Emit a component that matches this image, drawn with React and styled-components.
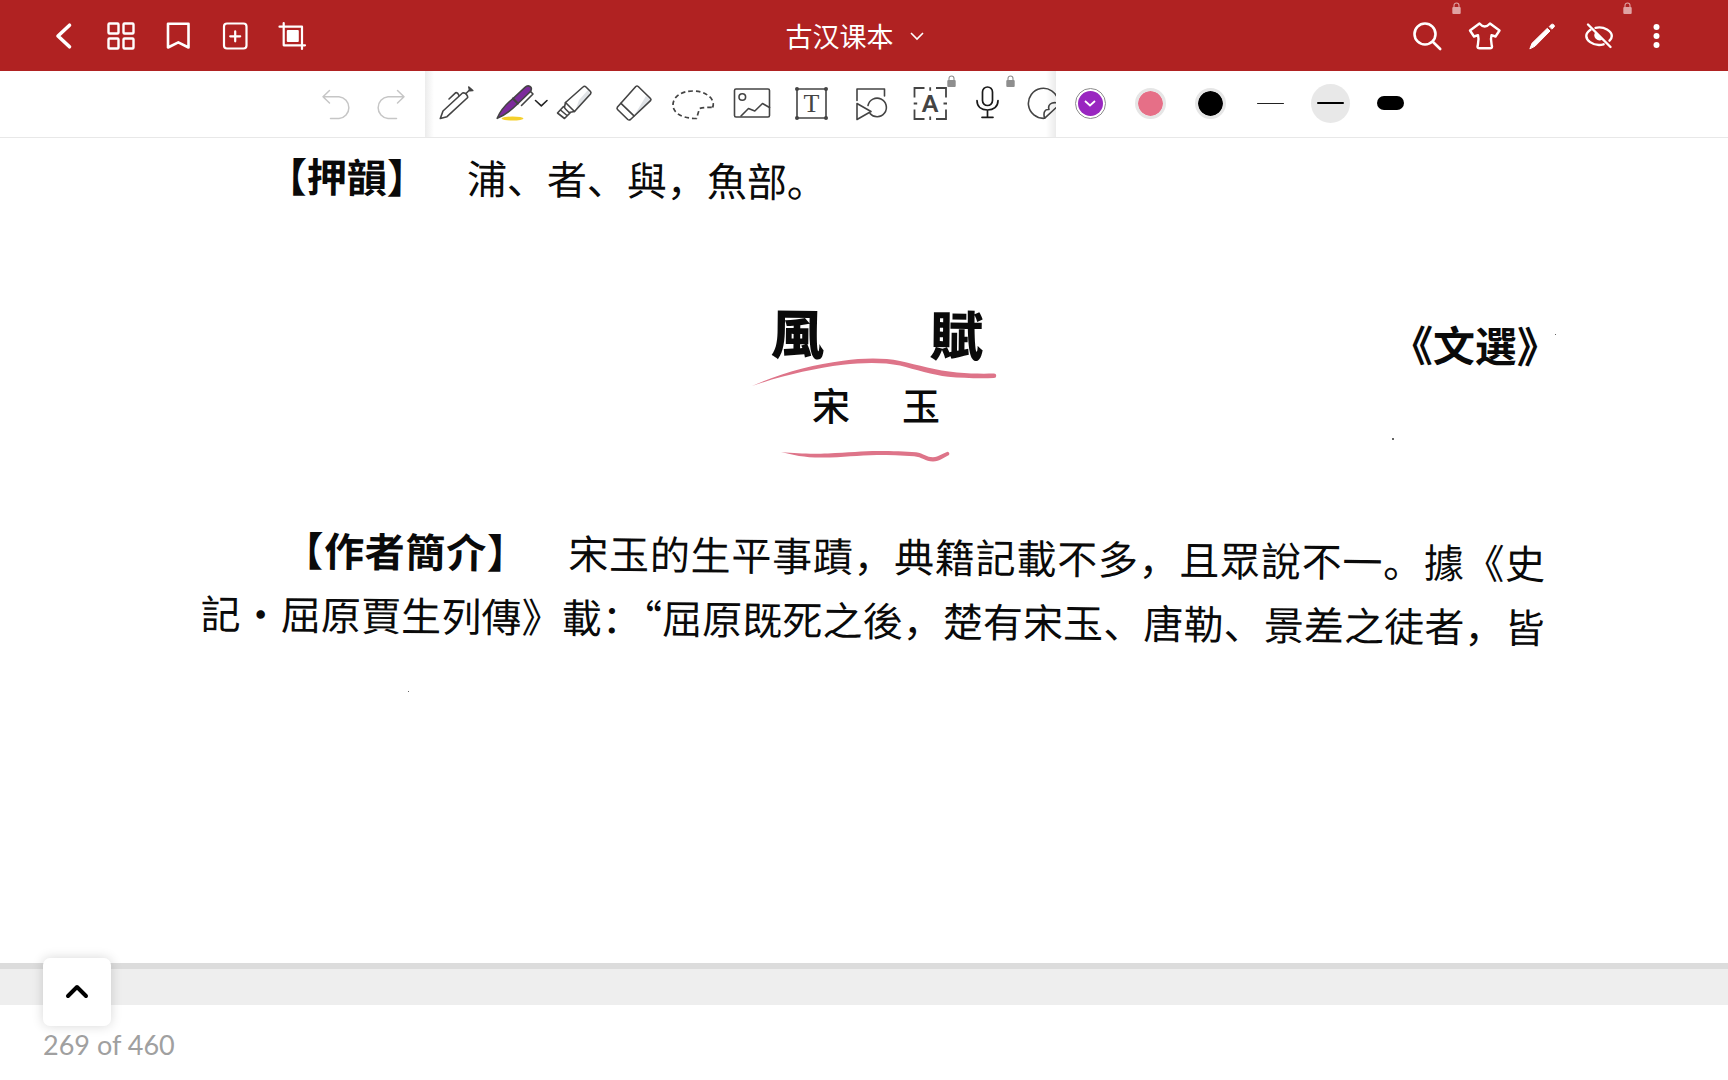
import styled, { createGlobalStyle } from "styled-components";

const GlobalStyle = createGlobalStyle`
  * {
    box-sizing: border-box;
  }

  body {
    margin: 0;
    background-color: #fff;
    font-family: "Lato", "Noto Sans CJK SC", sans-serif;
  }

  button {
    padding: 0;
    border: none;
    background: none;
    color: inherit;
    font: inherit;
    cursor: pointer;
  }

  svg {
    display: block;
    overflow: visible;
  }
`;

const AppShell = styled.div`
  display: flex;
  flex-direction: column;
  min-height: 100vh;
`;

/* ---------- header ---------- */

const Header = styled.header`
  display: grid;
  grid-template-columns: 1fr auto 1fr;
  align-items: center;
  height: 71px;
  padding: 0 44px 0 35px;
  background-color: #b02222;
  color: #fff;
`;

const HeaderGroup = styled.div`
  display: flex;
  justify-content: ${({ $end }) => ($end ? "flex-end" : "flex-start")};
`;

const HeaderButton = styled.button`
  position: relative;
  display: flex;
  align-items: center;
  justify-content: center;
  width: 57px;
  height: 71px;
`;

const TitleButton = styled.button`
  display: flex;
  align-items: center;
  gap: 16px;
  padding-right: 10px;
  font-family: "Noto Sans CJK SC", sans-serif;
  font-size: 27px;
  line-height: 40px;
`;

const LockBadge = styled.span`
  position: absolute;
  top: ${({ $top }) => $top}px;
  left: calc(50% + ${({ $shift }) => $shift}px);
  color: ${({ $color }) => $color};
`;

/* ---------- toolbar ---------- */

const Toolbar = styled.div`
  display: grid;
  grid-template-columns: 425fr 631px 672fr;
  height: 67px;
  border-bottom: 1px solid #e8e8e8;
  background-color: #fff;
`;

const HistoryGroup = styled.div`
  display: flex;
  align-items: center;
  justify-content: flex-end;
  gap: 25px;
  padding-right: 19px;
  color: #c6c6c6;
`;

const ToolStrip = styled.div`
  position: relative;
  display: flex;
  overflow: hidden;
  padding-left: 2px;
  background: linear-gradient(to right, #ececec, #fff 9px);
  color: #444;

  &::after {
    content: "";
    position: absolute;
    top: 0;
    right: 0;
    width: 10px;
    height: 100%;
    background: linear-gradient(to right, rgba(0, 0, 0, 0), rgba(0, 0, 0, 0.08));
  }
`;

const ToolButton = styled.button`
  position: relative;
  display: flex;
  flex-shrink: 0;
  align-items: center;
  justify-content: center;
  width: 59px;
  padding-bottom: 2px;
`;

const StyleGroup = styled.div`
  display: flex;
  padding-left: 4px;
`;

const StyleButton = styled.button`
  display: flex;
  align-items: center;
  justify-content: center;
  width: 60px;
  padding-bottom: 2px;
`;

const Swatch = styled.span`
  display: flex;
  align-items: center;
  justify-content: center;
  width: 31px;
  height: 31px;
  border: ${({ $selected }) => ($selected ? "1px solid #8d8d8d" : "3px solid #e6e6e6")};
  border-radius: 50%;
  padding: ${({ $selected }) => ($selected ? "2px" : "0")};
  background-color: ${({ $color }) => $color};
  background-clip: content-box;
  color: #fff;
`;

const Thickness = styled.span`
  display: flex;
  align-items: center;
  justify-content: center;
  width: 39px;
  height: 39px;
  border-radius: 50%;
  background-color: ${({ $selected }) => ($selected ? "#e8e8e8" : "transparent")};

  &::before {
    content: "";
    width: 27px;
    height: ${({ $size }) => $size}px;
    border-radius: 8px;
    background-color: ${({ $size }) => ($size === 1 ? "#222" : "#000")};
  }
`;

/* ---------- book page ---------- */

const Sheet = styled.main`
  flex: 1;
  padding: 6px 183px 40px 201px;
  background-color: #fff;
  color: #0a0a0a;
  font-family: "Noto Sans CJK SC", sans-serif;
`;

const Heading = styled.b`
  margin-right: 20px;
`;

// the scan leans slightly to the right
const RhymeNote = styled.p`
  margin: 0;
  padding-left: 66px;
  font-size: 40px;
  line-height: 60px;
  transform: rotate(0.6deg);
  transform-origin: left center;
`;

const TitleBlock = styled.section`
  position: relative;
  margin-top: 98px;
`;

const TitleRow = styled.div`
  display: grid;
  grid-template-columns: 1fr auto 1fr;
`;

const PoemTitle = styled.h1`
  grid-column: 2;
  margin: 0;
  padding-left: 8px;
  font-size: 53px;
  font-weight: 900;
  line-height: 60px;
  transform: rotate(0.6deg);
`;

const Source = styled.p`
  justify-self: end;
  margin: 12px -14px 0 0;
  font-size: 42px;
  font-weight: 700;
  line-height: 60px;
  transform: rotate(0.6deg);
`;

const Author = styled.p`
  display: flex;
  justify-content: center;
  gap: 52px;
  margin: 0;
  padding-left: 6px;
  font-size: 38px;
  font-weight: 500;
  line-height: 60px;
`;

const InkStrokes = styled.svg`
  position: absolute;
  top: 48px;
  left: calc(50% - 130px);
  fill: #de7489;
`;

const Speck = styled.span`
  position: absolute;
  top: ${({ $top }) => $top}px;
  right: ${({ $right }) => $right}px;
  width: ${({ $size }) => $size}px;
  height: ${({ $size }) => $size}px;
  border-radius: 50%;
  background-color: #333;
`;

const BiographyBlock = styled.section`
  position: relative;
  margin-top: 82px;
`;

const Biography = styled.p`
  margin: 0;
  font-size: 40px;
  line-height: 64px;
  text-align: justify;
  text-align-last: justify;
  text-indent: 82px;
  transform: rotate(0.6deg);
  transform-origin: left center;
`;

/* ---------- footer ---------- */

const Footer = styled.footer`
  position: relative;
`;

const PageGap = styled.div`
  height: 42px;
  border-top: 6px solid #dcdcdc;
  background-color: #eee;
`;

const PageNumber = styled.p`
  margin: 0;
  padding: 24px 43px 19px;
  color: #a0a0a0;
  font-size: 27px;
  line-height: 32px;
`;

const ExpandButton = styled.button`
  position: absolute;
  top: -5px;
  left: 43px;
  display: flex;
  align-items: center;
  justify-content: center;
  width: 68px;
  height: 68px;
  border-radius: 7px;
  padding-bottom: 2px;
  background-color: #fff;
  box-shadow: 0 0 12px rgba(0, 0, 0, 0.16);
  color: #000;
`;

/* ---------- icons ---------- */

function Icon({ size = 28, width = 2, children }) {
  return (
    <svg
      width={size}
      height={size}
      viewBox={`0 0 ${size} ${size}`}
      fill="none"
      stroke="currentColor"
      strokeWidth={width}
      strokeLinecap="round"
      strokeLinejoin="round"
      aria-hidden="true"
    >
      {children}
    </svg>
  );
}

function Lock({ top, shift, color }) {
  return (
    <LockBadge $top={top} $shift={shift} $color={color}>
      <svg width="9" height="12" viewBox="0 0 9 12" aria-hidden="true">
        <path d="M2 5.5V3.5a2.5 2.5 0 0 1 5 0v2" fill="none" stroke="currentColor" strokeWidth="1.1" />
        <rect x="0.3" y="5" width="8.4" height="7" rx="1" fill="currentColor" />
      </svg>
    </LockBadge>
  );
}

const leftActions = [
  {
    label: "Back",
    icon: (
      <Icon width={3.6}>
        <path d="M19.5 3.2 8 14l11.5 10.8" />
      </Icon>
    ),
  },
  {
    label: "Thumbnails",
    icon: (
      <Icon width={2.4}>
        <rect x="1.5" y="1.5" width="10" height="10" rx="1" />
        <rect x="16.5" y="1.5" width="10" height="10" rx="1" />
        <rect x="1.5" y="16.5" width="10" height="10" rx="1" />
        <rect x="16.5" y="16.5" width="10" height="10" rx="1" />
      </Icon>
    ),
  },
  {
    label: "Bookmark",
    icon: (
      <Icon width={2.6}>
        <path d="M4 1.8h20.5v23.7l-10.2-5.2L4 25.5z" />
      </Icon>
    ),
  },
  {
    label: "Add page",
    icon: (
      <Icon width={2.2}>
        <rect x="3" y="1.5" width="22.5" height="25" rx="3" />
        <path d="M14.2 9.3v10M9.2 14.3h10" />
      </Icon>
    ),
  },
  {
    label: "Crop",
    icon: (
      <Icon width={2.2}>
        <path d="M1.500 4.700h22.500V27M5.700 1v22.300H27" />
        <rect x="8.8" y="8" width="12" height="12" rx="1" fill="currentColor" stroke="none" />
      </Icon>
    ),
  },
];

const rightActions = [
  {
    label: "Search",
    locked: true,
    icon: (
      <Icon width={2.6}>
        <circle cx="11" cy="12" r="10.500" />
        <path d="m18.800 19.800 7.400 7.200" />
      </Icon>
    ),
  },
  {
    label: "Theme",
    icon: (
      <Icon size={32} width={2.4}>
        <path d="M10.500 3.500Q15.700 9.500 21 3.500L30.500 10.500 26.500 16.500 22.500 15.200C21 20 22.500 23.500 23 26.500Q23 28.300 21 28.300H10.500Q8.500 28.300 8.500 26.500C9 23.500 10.500 20 9 15.200L5 16.500 1 10.500Z" />
      </Icon>
    ),
  },
  {
    label: "Edit",
    icon: (
      <Icon width={1}>
        <path fill="currentColor" d="M2 26.500 4 21.300 19.300 6.300 22 9 7.200 24Z" />
        <path fill="currentColor" d="m21.500 4.300 1.800-1.800q1.500-.800 2.500.300t.3 2.300L24 6.900Z" />
      </Icon>
    ),
  },
  {
    label: "Hide annotations",
    locked: true,
    icon: (
      <Icon width={2.4}>
        <path d="M5.500 7.800C2.500 9.800 1.300 12.300 1.300 14c0 4.300 6 9 12.700 9 1.700 0 3.200-.300 4.600-.700" />
        <path d="M10.500 5.800C19.500 3.800 26.800 9.500 26.800 14c0 1.700-.8 3.200-2.300 4.700" />
        <path d="M3 2.500 25.500 25" />
        <path d="M10.200 10.200a5.300 5.300 0 0 0 7 7.500z" fill="currentColor" stroke="none" />
      </Icon>
    ),
  },
  {
    label: "More",
    icon: (
      <Icon>
        <g fill="currentColor" stroke="none">
          <circle cx="14.500" cy="5" r="3" />
          <circle cx="14.500" cy="14" r="3" />
          <circle cx="14.500" cy="23" r="3" />
        </g>
      </Icon>
    ),
  },
];

const tools = [
  {
    label: "Ballpoint pen",
    icon: (
      <Icon size={40} width={1.6}>
        <path d="M3.300 35.500 6 28 25.500 10Q28 9.500 29.500 11.500T30.700 14.500L10 33.700Z" />
        <path d="M12 16 18.500 9.800Q20.500 9 22 12.500M29 10.500l4-4" />
        <path d="m31.800 4 4 3.500-3 .200z" fill="currentColor" />
      </Icon>
    ),
  },
  {
    label: "Fountain pen",
    icon: (
      <Icon size={40} width={1.6}>
        <ellipse cx="16.500" cy="35.500" rx="11" ry="2" fill="#f5d02c" stroke="none" />
        <path d="M1.200 35.300C4 28.500 9.500 21.500 17 15.500L29 4.300Q31.500 2 34 3.500T34.500 8.500L21.500 21C15.500 27 9 32 1.200 35.300Z" fill="#7c2b9b" />
        <path d="m17 15.500 4.800 5" strokeWidth="2.200" />
        <path d="M34.500 8.500 37 11 25.500 22.500" />
        <path d="m39.500 17.500 5.800 5.300 5.700-5.300" stroke="#222" />
      </Icon>
    ),
  },
  {
    label: "Highlighter",
    icon: (
      <Icon size={40} width={1.6}>
        <path d="M20 28.500 35.500 10.500 33 7 24 17Z" fill="#e1e4e7" stroke="none" />
        <path d="M10.500 19.500 28 4Q29.500 2.500 31 4L35.500 8.500Q36.500 9.500 35.500 11L19.500 28.500Z" />
        <path d="M10.500 19.500 9.500 24Q9.500 25 10.500 26L14 29.500 19.500 28.500M8.500 23.500 2.500 30 9.500 35.500 15.500 29.500M5.500 27 12 32.500" />
      </Icon>
    ),
  },
  {
    label: "Eraser",
    icon: (
      <Icon size={40} width={1.6}>
        <path d="M20.500 32 37 17 32 13Z" fill="#dfe2e6" stroke="none" />
        <path d="M21.800 3.500Q23 2.500 24.200 3.500L36.500 15.500Q37.500 16.500 36.500 17.700L16.500 36.500Q15 37.500 13.800 36.500L3.500 26.500Q2.500 25.500 3.500 24Z" />
        <path d="m7 20.300 13 12.500" />
      </Icon>
    ),
  },
  {
    label: "Lasso",
    icon: (
      <Icon size={40} width={1.7}>
        <path
          strokeDasharray="4.500 3"
          strokeLinecap="butt"
          d="M39.500 24.500C43 18 35 8 20 8 7 8 0 14.500 0 22c0 8 9 13.500 23.500 13.500L26.500 25.500Q33 24 39.500 24.500"
        />
      </Icon>
    ),
  },
  {
    label: "Image",
    icon: (
      <Icon size={40} width={1.6}>
        <rect x="2.500" y="6" width="35" height="28" rx="1.500" />
        <circle cx="10.300" cy="14" r="3.300" />
        <path d="m9 33 7.500-7.500 6.300 2.500L30.500 20.500l7 4" />
      </Icon>
    ),
  },
  {
    label: "Text",
    icon: (
      <Icon size={40} width={1.6}>
        <rect x="6" y="6" width="29" height="29" />
        <g fill="currentColor" stroke="none">
          <circle cx="6" cy="6" r="2" />
          <circle cx="35" cy="6" r="2" />
          <circle cx="6" cy="35" r="2" />
          <circle cx="35" cy="35" r="2" />
          <text x="20.500" y="28.500" textAnchor="middle" fontFamily="Liberation Serif, serif" fontSize="26">
            T
          </text>
        </g>
      </Icon>
    ),
  },
  {
    label: "Shapes",
    icon: (
      <Icon size={40} width={1.6}>
        <path d="M7 17.500V6H34.500V13" />
        <path d="M7 20.500 21 28.500 7 36.500Z" />
        <path d="M18 22.500A9.300 9.300 0 1 1 20 30.500" />
      </Icon>
    ),
  },
  {
    label: "Text recognition",
    locked: true,
    icon: (
      <Icon size={40} width={1.8}>
        <path
          strokeLinecap="butt"
          strokeLinejoin="miter"
          d="M5.500 14.500V5H15.500M27 5H37V14.500M37 26.500V36H27M15.500 36H5.500V26.500M21.200 4.200v3.500M21.200 33.500v3.500M4.700 20.500h3.500M34.500 20.500h3.500"
        />
        <text
          x="21.200"
          y="28.500"
          textAnchor="middle"
          fontFamily="Lato, sans-serif"
          fontSize="23"
          fontWeight="900"
          fill="currentColor"
          stroke="none"
        >
          A
        </text>
      </Icon>
    ),
  },
  {
    label: "Record audio",
    locked: true,
    icon: (
      <Icon size={40} width={1.7}>
        <g stroke="#1a1a1a">
          <rect x="14.500" y="4" width="10" height="18.500" rx="5" />
          <path d="M9 17.500C9 24 13.500 27 19.500 27S30 24 30 17.500M19.500 27v7M14 34.300h11" />
        </g>
      </Icon>
    ),
  },
  {
    label: "Sticker",
    icon: (
      <Icon size={40} width={1.6}>
        <path d="M31 17A15 15 0 1 0 17.500 35.300L32 22" />
        <path d="M17.500 35C16 29 18 26 22 26.500 20.500 22 24 18.500 31 20" />
      </Icon>
    ),
  },
];

const swatches = [
  { label: "Purple", color: "#9926c0", selected: true },
  { label: "Pink", color: "#e66f87" },
  { label: "Black", color: "#000" },
];

const thicknesses = [
  { label: "Thin", size: 1 },
  { label: "Medium", size: 2, selected: true },
  { label: "Thick", size: 14 },
];

function TopBar() {
  return (
    <Header>
      <HeaderGroup>
        {leftActions.map((action) => (
          <HeaderButton key={action.label} aria-label={action.label}>
            {action.icon}
          </HeaderButton>
        ))}
      </HeaderGroup>
      <TitleButton>
        古汉课本
        <svg width="14" height="8" viewBox="0 0 14 8" fill="none" stroke="currentColor" strokeWidth="1.600" aria-hidden="true">
          <path d="m1 1 6 6 6-6" />
        </svg>
      </TitleButton>
      <HeaderGroup $end>
        {rightActions.map((action) => (
          <HeaderButton key={action.label} aria-label={action.label}>
            {action.icon}
            {action.locked && <Lock top={2} shift={24} color="#e0a3a3" />}
          </HeaderButton>
        ))}
      </HeaderGroup>
    </Header>
  );
}

function ToolBar() {
  return (
    <Toolbar>
      <HistoryGroup>
        <button aria-label="Undo">
          <Icon size={30} width={1.500}>
            <path d="M8.500 1.500 2 7.800 8.500 14M2 7.800H18a10.900 10.900 0 0 1 0 21.700H9.500" />
          </Icon>
        </button>
        <button aria-label="Redo">
          <Icon size={30} width={1.500}>
            <path d="M21.500 1.500 28 7.800 21.500 14M28 7.800H12a10.900 10.900 0 0 0 0 21.700h8.500" />
          </Icon>
        </button>
      </HistoryGroup>
      <ToolStrip>
        {tools.map((tool) => (
          <ToolButton key={tool.label} aria-label={tool.label}>
            {tool.icon}
            {tool.locked && <Lock top={4} shift={18} color="#8e8e8e" />}
          </ToolButton>
        ))}
      </ToolStrip>
      <StyleGroup>
        {swatches.map((swatch) => (
          <StyleButton key={swatch.label} aria-label={swatch.label}>
            <Swatch $color={swatch.color} $selected={swatch.selected}>
              {swatch.selected && (
                <svg width="12" height="7" viewBox="0 0 12 7" fill="none" stroke="currentColor" strokeWidth="1.800" aria-hidden="true">
                  <path d="m1 1 5 4.500L11 1" />
                </svg>
              )}
            </Swatch>
          </StyleButton>
        ))}
        {thicknesses.map((item) => (
          <StyleButton key={item.label} aria-label={item.label}>
            <Thickness $size={item.size} $selected={item.selected} />
          </StyleButton>
        ))}
      </StyleGroup>
    </Toolbar>
  );
}

function BookPage() {
  return (
    <Sheet lang="zh-Hans">
      <RhymeNote>
        <Heading>【押韻】</Heading>　浦、者、與，魚部。
      </RhymeNote>
      <TitleBlock>
        <TitleRow>
          <PoemTitle>風　　賦</PoemTitle>
          <Source>《文選》</Source>
        </TitleRow>
        <Author>
          <span>宋</span>
          <span>玉</span>
        </Author>
        <InkStrokes width="260" height="120" viewBox="0 0 260 120" aria-hidden="true">
          <path d="M9 36C38 23 70 14.500 100 10.800 120 8 140 7.700 157 11 175 15 193 20.500 214 22.500 228 23.700 240 23.800 251 23.500A2.200 2.200 0 0 1 251 28C235 28.500 220 28 205 26.700 190 25 172 19.500 157 15.500 140 12 120 12.300 100 14.800 70 18.500 38 26 9 36Z" />
          <path d="M38 102C55 103.500 65 104 85 103.500 105 102.500 120 101.200 135 101 150 101 162 101.300 173 102.200 181 103.500 184 107.300 190 107.200 196 106.500 199 103.500 204 101.900A2 2 0 0 1 206 105C201 107.500 197 111 190 111.500 182 111.500 179 107 171 106.300 158 105.200 147 105 134 105 115 105.200 100 107.500 80 107.600 62 107.800 50 105 38 102Z" />
        </InkStrokes>
        <Speck $top={136} $right={151} $size={2} />
        <Speck $top={32} $right={-11} $size={1} />
      </TitleBlock>
      <BiographyBlock>
        <Biography>
          <Heading>【作者簡介】</Heading>　宋玉的生平事蹟，典籍記載不多，且眾說不一。據《史
          <br />
          記·屈原賈生列傳》載：“屈原既死之後，楚有宋玉、唐勒、景差之徒者，皆
        </Biography>
        <Speck $top={175} $right={1136} $size={1} />
      </BiographyBlock>
    </Sheet>
  );
}

function App() {
  return (
    <>
      <GlobalStyle />
      <AppShell>
        <TopBar />
        <ToolBar />
        <BookPage />
        <Footer>
          <PageGap />
          <PageNumber>269 of 460</PageNumber>
          <ExpandButton aria-label="Show page list">
            <svg width="22" height="14" viewBox="0 0 22 14" fill="none" stroke="currentColor" strokeWidth="4" strokeLinecap="round" strokeLinejoin="round" aria-hidden="true">
              <path d="M2 12 11 3l9 9" />
            </svg>
          </ExpandButton>
        </Footer>
      </AppShell>
    </>
  );
}

export default App;
